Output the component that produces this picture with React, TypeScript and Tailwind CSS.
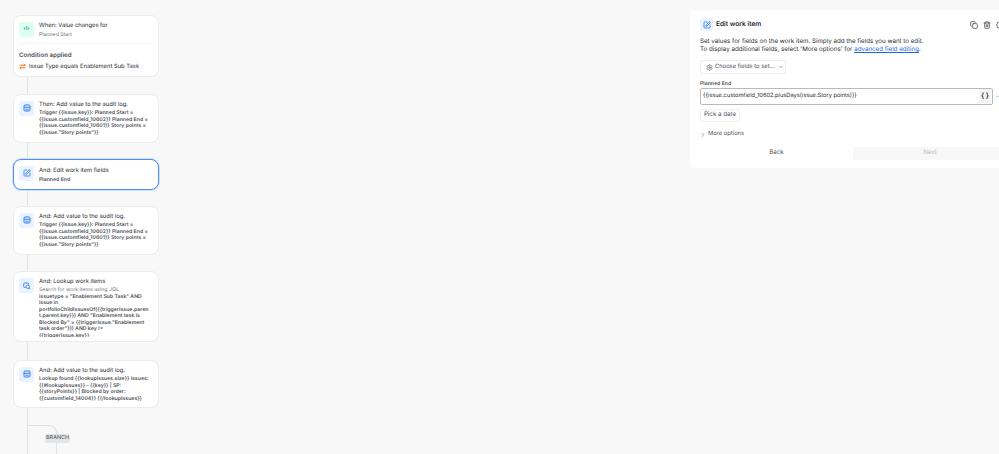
import { ReactNode } from "react";
import { ChevronDown, ChevronRight, Copy, Settings, SquarePen, Trash2, Circle } from "lucide-react";

const auditText =
  'Trigger {{issue.key}}: Planned Start = {{issue.customfield_10602}} Planned End = {{issue.customfield_10601}} Story points = {{issue."Story points"}}';

const IconBox = ({ children, className = "" }: { children: ReactNode; className?: string }) => (
  <div className={`flex h-[15px] w-[15px] shrink-0 items-center justify-center rounded-[3px] bg-[#e9f2ff] text-[#357de8] ${className}`}>
    {children}
  </div>
);

const AuditIcon = () => (
  <IconBox>
    <svg viewBox="0 0 16 16" className="h-[8px] w-[8px]" fill="none" stroke="currentColor" strokeWidth="2">
      <rect x="2" y="2" width="12" height="12" rx="2" />
      <path d="M2 6.5h12M5 10.5h6" />
    </svg>
  </IconBox>
);

const EditIcon = () => (
  <IconBox>
    <SquarePen className="h-[8px] w-[8px]" strokeWidth={2.5} />
  </IconBox>
);

const LookupIcon = () => (
  <IconBox>
    <svg viewBox="0 0 16 16" className="h-[8px] w-[8px]" fill="none" stroke="currentColor" strokeWidth="1.8">
      <path d="M5 11H3a1.5 1.5 0 0 1-1.5-1.5v-6A1.5 1.5 0 0 1 3 2h7a1.5 1.5 0 0 1 1.5 1.5V5" />
      <circle cx="9.5" cy="9.5" r="3.5" />
      <path d="m12 12 2.5 2.5" />
    </svg>
  </IconBox>
);

const Card = ({ title, body, icon, className = "" }: { title: string; body: string; icon: ReactNode; className?: string }) => (
  <div className={`flex gap-[5px] overflow-hidden rounded-[8px] border border-[#ebecee] bg-white pl-[5px] pr-[9px] pt-[6px] ${className}`}>
    {icon}
    <div className="min-w-0 flex-1">
      <p className="text-[5.8px] leading-[8px] text-[#292a2e]">{title}</p>
      <p className="mt-[1.5px] break-words text-[5.2px] font-semibold leading-[6.5px] text-[#505258]">{body}</p>
    </div>
  </div>
);

const Line = ({ className = "" }: { className?: string }) => <div className={`ml-[14px] w-px bg-[#dfe1e4] ${className}`} />;

const App = () => (
  <div className="flex h-[454px] w-[999px] overflow-hidden bg-[#f8f8f8] font-['Inter',sans-serif] [text-rendering:geometricPrecision]">
    <div className="w-[690px] shrink-0 pl-[13px] pt-[15px]">
      <div className="w-[146px]">
        <div className="h-[62px] rounded-[8px] border border-[#ebecee] bg-white px-[5px] pt-[6px]">
          <div className="flex gap-[5px]">
            <IconBox className="!bg-[#dcfff1] !text-[#22a06b]">
              <span className="text-[5px] font-bold">{"‹!›"}</span>
            </IconBox>
            <div>
              <p className="text-[5.8px] leading-[8px] text-[#292a2e]">When: Value changes for</p>
              <p className="mt-[2px] text-[5.2px] leading-[6.5px] text-[#6b6e76]">Planned Start</p>
            </div>
          </div>
          <div className="mt-[4px] border-t border-[#f3f3f4] pt-[8px]">
            <p className="text-[6.2px] font-semibold leading-[8px] text-[#505258]">Condition applied</p>
            <div className="mt-[3px] flex items-center gap-[3px]">
              <svg viewBox="0 0 16 16" className="h-[7px] w-[7px] text-[#e56910]" fill="none" stroke="currentColor" strokeWidth="2">
                <path d="M1 5h13M11 2l3 3-3 3M15 11H2M5 8l-3 3 3 3" />
              </svg>
              <span className="text-[5.8px] leading-[8px] text-[#292a2e]">Issue Type equals Enablement Sub Task</span>
            </div>
          </div>
        </div>
        <Line className="h-[16.5px]" />
        <Card className="h-[49px]" title="Then: Add value to the audit log." body={auditText} icon={<AuditIcon />} />
        <Line className="h-[16px]" />
        <div className="flex h-[31px] gap-[5px] overflow-hidden rounded-[8px] border-[1.5px] border-[#4c8ff5] bg-white pl-[5px] pr-[9px] pt-[6px] shadow-[0_0_0_1px_#cfe1fd]">
          <EditIcon />
          <div className="min-w-0 flex-1 pt-[1px]">
            <p className="text-[5.8px] leading-[8px] text-[#292a2e]">And: Edit work item fields</p>
            <p className="mt-[2px] text-[5.2px] font-semibold leading-[6.5px] text-[#505258]">Planned End</p>
          </div>
        </div>
        <Line className="h-[16px]" />
        <Card className="h-[49px]" title="And: Add value to the audit log." body={auditText} icon={<AuditIcon />} />
        <Line className="h-[16.5px]" />
        <div className="flex h-[71px] gap-[5px] overflow-hidden rounded-[8px] border border-[#ebecee] bg-white pl-[5px] pr-[9px] pt-[6px]">
          <LookupIcon />
          <div className="h-[59px] min-w-0 flex-1 overflow-hidden">
            <p className="text-[5.8px] leading-[8px] text-[#292a2e]">And: Lookup work items</p>
            <p className="mt-[1px] text-[5.2px] leading-[6.5px] text-[#6b6e76]">Search for work items using JQL</p>
            <p className="break-words text-[5.2px] font-semibold leading-[6.5px] text-[#505258]">
              issuetype = "Enablement Sub Task" AND issue in portfolioChildIssuesOf({"{{"}triggerIssue.parent.parent.key{"}}"}) AND "Enablement task is Blocked By" = {"{{"}triggerIssue."Enablement task order"{"}}"}) AND key != {"{{"}triggerIssue.key{"}}"}
            </p>
          </div>
        </div>
        <Line className="h-[17.5px]" />
        <Card
          className="h-[48px]"
          title="And: Add value to the audit log."
          body={'Lookup found {{lookupIssues.size}} issues: {{#lookupIssues}} - {{key}} | SP: {{storyPoints}} | Blocked by order: {{customfield_14004}} {{/lookupIssues}}'}
          icon={<AuditIcon />}
        />
        <div className="relative">
          <Line className="h-[47px]" />
          <div className="absolute left-[15px] top-[17px] h-[30px] w-[29px] rounded-tr-[8px] border-r border-t border-[#dfe1e4]" />
          <span className="absolute left-[32px] top-[26px] rounded-[2px] bg-[#e4e5e7] px-[1px] text-[5.5px] leading-[9px] text-[#505258]">BRANCH</span>
        </div>
      </div>
    </div>
    <div className="mt-[10px] h-[158px] min-w-0 flex-1 rounded-l-[4px] bg-white pl-[10px] pt-[8px]">
      <div className="flex items-center">
        <div className="flex h-[13px] w-[13px] items-center justify-center rounded-[3px] bg-[#e9f2ff] text-[#357de8]">
          <SquarePen className="h-[8px] w-[8px]" strokeWidth={2.5} />
        </div>
        <h2 className="ml-[3px] text-[6.6px] font-semibold leading-[13px] text-[#292a2e]">Edit work item</h2>
        <div className="ml-auto flex w-[29px] shrink-0 items-center gap-[5px] overflow-hidden text-[#505258]">
          <Copy className="h-[8px] w-[8px] shrink-0" strokeWidth={2.5} />
          <Trash2 className="h-[8px] w-[8px] shrink-0" strokeWidth={2.5} />
          <Circle className="h-[8px] w-[8px] shrink-0" strokeWidth={2.5} />
        </div>
      </div>
      <p className="mt-[7px] text-[6.2px] leading-[8px] text-[#292a2e]">
        Set values for fields on the work item. Simply add the fields you want to edit.
        <br />
        To display additional fields, select 'More options' for{" "}
        <span className="text-[#1868db] underline">advanced field editing</span>.
      </p>
      <div className="mt-[6px] flex h-[14px] w-[86px] items-center rounded-[2px] border border-[#ebecee] pl-[5px] text-[#505258]">
        <Settings className="h-[7px] w-[7px]" />
        <span className="ml-[2px] whitespace-nowrap text-[5.8px]">Choose fields to set...</span>
        <ChevronDown className="ml-[3px] h-[6px] w-[6px]" />
      </div>
      <p className="mt-[7px] text-[5.2px] font-semibold leading-[7px] text-[#505258]">Planned End</p>
      <div className="flex">
        <div className="flex h-[16.5px] w-[293px] shrink-0 items-center justify-between rounded-[2px] border border-[#b7b9be] pl-[2px] pr-[1px]">
          <span className="text-[5.7px] text-[#292a2e]">{"{{issue.customfield_10602.plusDays(issue.Story points)}}"}</span>
          <span className="flex h-[14px] w-[12px] items-center justify-center bg-[#f4f4f5] text-[7px] font-semibold text-[#292a2e]">{"{ }"}</span>
        </div>
        <span className="ml-[3px] text-[6px] leading-[17px] text-[#505258]">-</span>
      </div>
      <div className="mt-[3.5px] flex h-[13px] w-[40px] items-center justify-center rounded-[2px] border border-[#f0f0f1] text-[6.2px] text-[#505258]">Pick a date</div>
      <div className="mt-[8px] flex h-[10px] items-center text-[#505258]">
        <ChevronRight className="h-[6px] w-[6px]" />
        <span className="ml-[2px] text-[5.8px]">More options</span>
      </div>
      <div className="mt-[7px] flex h-[13px] items-center">
        <div className="w-[153px] shrink-0 text-center text-[6.2px] text-[#505258]">Back</div>
        <div className="flex h-full w-[154px] shrink-0 items-center justify-center bg-[#f8f8f8] text-[6.2px] text-[#b7b9be]">Next</div>
      </div>
    </div>
  </div>
);

export default App;
